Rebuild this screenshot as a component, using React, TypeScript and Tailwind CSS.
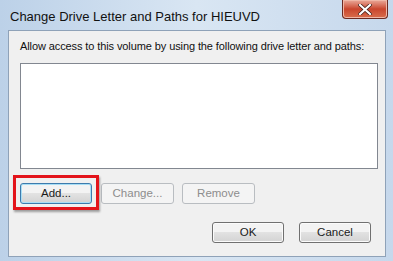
import React from 'react'

const font = { fontFamily: '"Liberation Sans", Arial, sans-serif' }

function Btn({ label, disabled, focused, className = '' }: { label: string; disabled?: boolean; focused?: boolean; className?: string }) {
  if (disabled) {
    return (
      <div className={`h-[21px] w-[73px] flex items-center justify-center rounded-[3px] border border-[#b9bdc1] bg-[#f4f4f4] text-[11.5px] text-[#8d8d8d] ${className}`}>
        {label}
      </div>
    )
  }
  return (
    <div
      className={`h-[21px] w-[72px] flex items-center justify-center rounded-[3px] border ${
        focused ? 'border-[#3d7bad] shadow-[inset_0_0_0_1px_#a8def5]' : 'border-[#707070] shadow-[inset_0_0_0_1px_#fbfbfb]'
      } bg-gradient-to-b from-[#f3f3f3] from-45% via-[#e2e2e2] via-50% to-[#d3d3d3] text-[11.5px] text-[#1a1a1a] ${className}`}
    >
      {label}
    </div>
  )
}

export default function App() {
  return (
    <div
      style={font}
      className="w-[393px] h-[261px] overflow-hidden flex flex-col bg-gradient-to-r from-[#bcd1e8] via-[#d9e6f3] to-[#c6d8ec]"
    >
      {/* Title bar */}
      <div className="h-[30px] flex items-start justify-between pl-[10px] pr-[5px]">
        <span className="mt-[7px] text-[13px] text-[#111] whitespace-nowrap">Change Drive Letter and Paths for HIEUVD</span>
        <div className="w-[46px] h-[19px] flex items-center justify-center rounded-b-[4px] border border-t-0 border-[#6b2a22] bg-gradient-to-b from-[#e9a99a] via-[#c9452d] to-[#d86d4c] shadow-[inset_0_0_0_1px_#f0b7a6]">
          <svg width="14" height="11" viewBox="0 0 14 11">
            <path d="M2 1 L12 10 M12 1 L2 10" stroke="#3c1a14" strokeWidth="3.6" strokeLinecap="square" />
            <path d="M2 1 L12 10 M12 1 L2 10" stroke="#ffffff" strokeWidth="2.2" strokeLinecap="square" />
          </svg>
        </div>
      </div>

      {/* Client area */}
      <div className="ml-[8px] mr-[7px] h-[227px] border border-[#8fa2b8] bg-[#f0f0f0] flex flex-col pl-[11px] pr-[14px]">
        <p className="mt-[7px] text-[11px] tracking-[-0.1px] text-[#111] leading-[16px] whitespace-nowrap">
          Allow access to this volume by using the following drive letter and paths:
        </p>
        <div className="mt-[9px] w-[358px] h-[106px] border border-[#828790] bg-white" />
        <div className="mt-[14px] flex">
          <div className="relative">
            <Btn label="Add..." focused />
            <div className="absolute -left-[7px] -right-[7px] -top-[8px] -bottom-[6px] border-[3px] border-[#e3141b] shadow-[1px_2px_2px_rgba(0,0,0,0.35)]" />
          </div>
          <Btn label="Change..." disabled className="ml-[9px]" />
          <Btn label="Remove" disabled className="ml-[8px]" />
        </div>
        <div className="mt-[18px] flex justify-end">
          <Btn label="OK" />
          <Btn label="Cancel" className="ml-[15px]" />
        </div>
      </div>
    </div>
  )
}
